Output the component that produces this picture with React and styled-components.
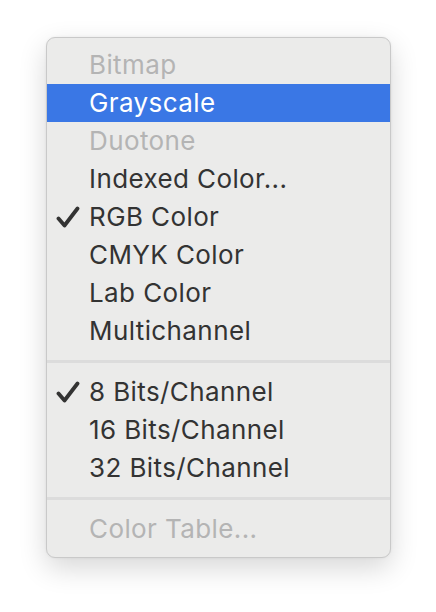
import React from 'react'
import styled, { createGlobalStyle } from 'styled-components'

const GlobalStyle = createGlobalStyle`
  html, body {
    margin: 0;
    padding: 0;
    background: #ffffff;
  }
  body {
    font-family: Inter, "Liberation Sans", sans-serif;
  }
`

const groups = [
  [
    { label: 'Bitmap', disabled: true },
    { label: 'Grayscale', active: true },
    { label: 'Duotone', disabled: true },
    { label: 'Indexed Color...' },
    { label: 'RGB Color', checked: true },
    { label: 'CMYK Color' },
    { label: 'Lab Color' },
    { label: 'Multichannel' }
  ],
  [
    { label: '8 Bits/Channel', checked: true },
    { label: '16 Bits/Channel' },
    { label: '32 Bits/Channel' }
  ],
  [
    { label: 'Color Table...', disabled: true }
  ]
]

const Check = () => (
  <svg width="24" height="22" viewBox="0 0 24 22">
    <path d="M2.5 12.5 L8.5 19.5 L21.5 2.5" fill="none" stroke="#333333" strokeWidth="3.8" strokeLinecap="round" strokeLinejoin="round" />
  </svg>
)

const App = () => (
  <Page>
    <GlobalStyle />
    <Menu>
      {groups.map((group, gi) => (
        <React.Fragment key={gi}>
          {gi > 0 && <Separator />}
          {group.map(item => (
            <Item key={item.label} active={item.active} disabled={item.disabled}>
              <Mark>{item.checked && <Check />}</Mark>
              <Label>{item.label}</Label>
            </Item>
          ))}
        </React.Fragment>
      ))}
    </Menu>
  </Page>
)

export default App

// STYLES
const Page = styled.div`
  width: 436px;
  height: 612px;
  padding: 37px 0 0 46px;
  box-sizing: border-box;
`

const Menu = styled.div`
  width: 345px;
  box-sizing: border-box;
  padding: 8px 0 9px;
  background: #ebebea;
  border: 1px solid #c9c9c9;
  border-radius: 9px;
  box-shadow: 0 10px 28px rgba(0, 0, 0, 0.16), 0 0 3px rgba(0, 0, 0, 0.06);
`

const Item = styled.div`
  display: flex;
  align-items: center;
  height: 38px;
  padding-left: 9px;
  background: ${props => props.active ? '#3a77e5' : 'transparent'};
  color: ${props => props.active ? '#ffffff' : props.disabled ? '#b4b4b4' : '#333333'};
`

const Mark = styled.span`
  display: flex;
  align-items: center;
  width: 33px;
  height: 38px;
`

const Label = styled.span`
  font-size: 26px;
  letter-spacing: 0.4px;
  line-height: 38px;
  white-space: nowrap;
`

const Separator = styled.div`
  height: 3px;
  margin: 10px 0;
  background: #dcdcdc;
`
